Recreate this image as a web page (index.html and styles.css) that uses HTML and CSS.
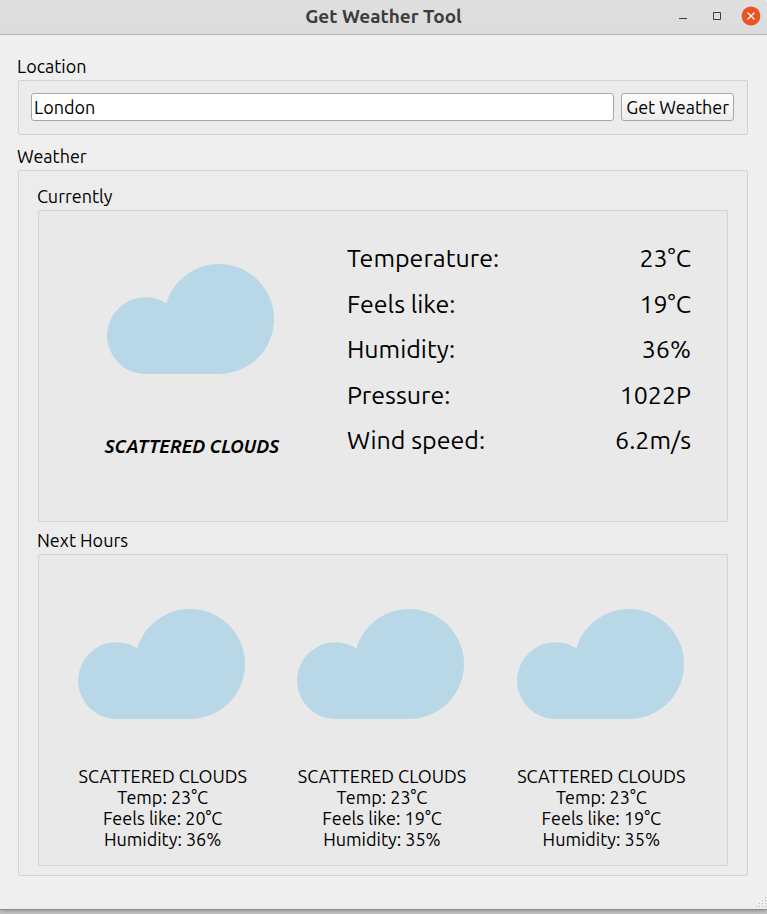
FILE: index.html
```html
<!DOCTYPE html>
<html lang="en">
<head>
<meta charset="utf-8">
<meta name="viewport" content="width=device-width, initial-scale=1">
<title>Get Weather Tool</title>
<link rel="stylesheet" href="styles.css">
</head>
<body>
<svg class="defs" aria-hidden="true">
  <symbol id="cloud" viewBox="0 0 169 110">
    <path d="M38.400 110A38.400 38.400 0 1 1 59.300 39.300A55 55 0 1 1 112 110Z" fill="#b9d8e7"/>
  </symbol>
</svg>
<div class="window">
  <header class="titlebar">
    <h1 class="title">Get Weather Tool</h1>
    <div class="controls">
      <button class="control" type="button" aria-label="Minimize">
        <svg width="20" height="20" viewBox="0 0 20 20"><path d="M6 12.500h8" stroke="#3d3d3d"/></svg>
      </button>
      <button class="control" type="button" aria-label="Maximize">
        <svg width="20" height="20" viewBox="0 0 20 20"><path d="M6.500 6.500h7v7h-7z" fill="none" stroke="#3d3d3d"/></svg>
      </button>
      <button class="control" type="button" aria-label="Close">
        <svg width="20" height="20" viewBox="0 0 20 20"><circle cx="10" cy="10" r="9.400" fill="#e95420"/><path d="M6.500 6.500l7 7M13.500 6.500l-7 7" stroke="#fff" stroke-width="1.300"/></svg>
      </button>
    </div>
  </header>
  <main class="content">
    <section>
      <label class="caption" for="location">Location</label>
      <form class="group search">
        <input class="field" id="location" type="text" value="London">
        <button class="submit" type="button">Get Weather</button>
      </form>
    </section>
    <section class="weather">
      <h2 class="caption">Weather</h2>
      <div class="group forecast">
        <section>
          <h3 class="caption">Currently</h3>
          <div class="group current">
            <div class="summary">
              <svg class="cloud"><use href="#cloud"/></svg>
              <p class="condition">SCATTERED CLOUDS</p>
            </div>
            <dl class="readings">
              <div class="reading"><dt>Temperature:</dt><dd>23°C</dd></div>
              <div class="reading"><dt>Feels like:</dt><dd>19°C</dd></div>
              <div class="reading"><dt>Humidity:</dt><dd>36%</dd></div>
              <div class="reading"><dt>Pressure:</dt><dd>1022P</dd></div>
              <div class="reading"><dt>Wind speed:</dt><dd>6.2m/s</dd></div>
            </dl>
          </div>
        </section>
        <section class="next">
          <h3 class="caption">Next Hours</h3>
          <div class="group hours">
            <article class="hour">
              <svg class="cloud"><use href="#cloud"/></svg>
              <p>SCATTERED CLOUDS</p><p>Temp: 23°C</p><p>Feels like: 20°C</p><p>Humidity: 36%</p>
            </article>
            <article class="hour">
              <svg class="cloud"><use href="#cloud"/></svg>
              <p>SCATTERED CLOUDS</p><p>Temp: 23°C</p><p>Feels like: 19°C</p><p>Humidity: 35%</p>
            </article>
            <article class="hour">
              <svg class="cloud"><use href="#cloud"/></svg>
              <p>SCATTERED CLOUDS</p><p>Temp: 23°C</p><p>Feels like: 19°C</p><p>Humidity: 35%</p>
            </article>
          </div>
        </section>
      </div>
    </section>
  </main>
  <svg class="grip" width="12" height="12" viewBox="0 0 12 12" aria-hidden="true">
    <path d="M10 1h1v1h-1zM7 4h1v1h-1zM10 4h1v1h-1zM4 7h1v1h-1zM7 7h1v1h-1zM10 7h1v1h-1zM1 10h1v1h-1zM4 10h1v1h-1zM7 10h1v1h-1zM10 10h1v1h-1z" fill="#b4b4b4"/>
  </svg>
</div>
</body>
</html>
```

FILE: styles.css
```css
* {
  box-sizing: border-box;
}

body {
  margin: 0;
  padding-bottom: 4px;
  background: #c8c8c8;
  color: #000;
  font: 18px/21px Ubuntu, "Noto Sans", sans-serif;
}

h1, h2, h3, p, dl, dd {
  margin: 0;
  font-size: inherit;
}

.defs {
  position: absolute;
  width: 0;
  height: 0;
}

.window {
  position: relative;
  border-bottom: 1px solid #8c8c8c;
  background: #efefef;
  box-shadow: 0 1px 4px #8c8c8c;
}

.titlebar {
  display: grid;
  grid-template-columns: 1fr auto 1fr;
  align-items: center;
  height: 35px;
  padding: 0 6px 2px;
  border-bottom: 1px solid #b5b5b5;
  border-radius: 0 4px 0 0;
  background: linear-gradient(#dfdfdf, #dcdcdc);
}

.title {
  grid-column: 2;
  color: #3d3d3d;
  font-size: 19px;
  font-weight: 700;
}

.controls {
  display: flex;
  justify-content: flex-end;
  gap: 14px;
}

.control {
  width: 20px;
  height: 20px;
  padding: 0;
  border: 0;
  background: none;
}

.control svg {
  display: block;
}

.content {
  padding: 19px 19px 33px 18px;
}

.caption {
  display: block;
  margin-left: -1px;
  padding-bottom: 2px;
  font-weight: 400;
  line-height: 24px;
}

.group {
  border: 1px solid #d3d3d3;
  border-radius: 2px;
  background: rgba(0, 0, 0, 0.012);
}

.search {
  display: flex;
  gap: 7px;
  padding: 12px 13px 13px 12px;
}

.field,
.submit {
  height: 28px;
  border: 1px solid #a8a8a8;
  border-radius: 3px;
  color: #000;
  font: inherit;
}

.field {
  flex: 1;
  min-width: 0;
  padding: 0 2px;
  background: #fff;
}

.submit {
  padding: 0 4px;
  background: linear-gradient(#fdfdfd, #ececec);
}

.weather {
  margin-top: 9px;
}

.forecast {
  padding: 13px 19px 9px;
}

.current {
  display: grid;
  grid-template-columns: 8fr 9fr;
  column-gap: 2px;
  min-height: 312px;
  padding-right: 36px;
}

.summary {
  display: flex;
  flex-direction: column;
  align-items: center;
  gap: 62px;
  padding-top: 53px;
}

.cloud {
  display: block;
  width: 169px;
  height: 110px;
}

.condition {
  font-style: italic;
  font-weight: 700;
}

.readings {
  display: flex;
  flex-direction: column;
  justify-content: space-between;
  padding: 32px 0 66px;
  font-size: 25px;
  line-height: 30px;
}

.reading {
  display: flex;
  justify-content: space-between;
}

.next {
  margin-top: 6px;
}

.hours {
  display: grid;
  grid-template-columns: repeat(3, 1fr);
  padding: 54px 16px 15px 14px;
  text-align: center;
}

.hour .cloud {
  margin: 0 auto 47px;
}

.grip {
  position: absolute;
  right: 0;
  bottom: 1px;
}
```
